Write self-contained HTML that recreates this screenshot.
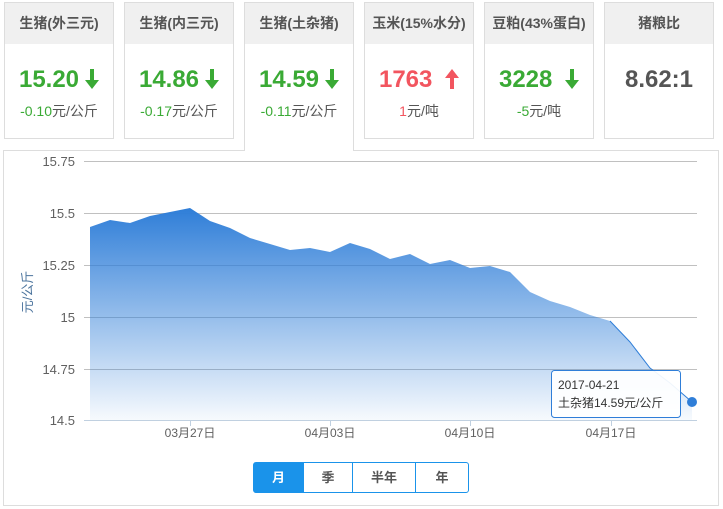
<!DOCTYPE html><html><head><meta charset="utf-8"><style>
body{margin:0;width:723px;height:509px;background:#fff;font-family:"Liberation Sans","Noto Sans CJK SC",sans-serif;position:relative;overflow:hidden}
.c{position:absolute;top:2px;width:108px;height:135px;border:1px solid #ddd;background:#fff;text-align:center}
.c .h{height:41px;background:#f0f0f0;line-height:41px;font-size:14px;font-weight:bold;color:#555}
.c .v{font-size:24px;font-weight:bold;margin-top:20px;height:32px;line-height:32px}
.c .v svg{vertical-align:-2px;margin-left:6px}
.c .s{font-size:14px;color:#555;margin-top:5px}
.g{color:#3aaa35}.r{color:#f2555f}
.act{height:148px;border-bottom:none;z-index:2}
.chart{position:absolute;left:3px;top:150px;width:714px;height:354px;border:1px solid #ddd}
.btns{position:absolute;left:253px;top:462px;width:214px;height:29px;border:1px solid #1a93ea;border-radius:3px;display:flex;font-size:13px;font-weight:bold;color:#555}
.btns div{text-align:center;line-height:29px;border-left:1px solid #1a93ea}
</style></head><body>
<div class="c" style="left:4px"><div class="h">生猪(外三元)</div><div class="v g">15.20<svg width="14" height="20" viewBox="0 0 14 20"><path d="M5 0h4v11h5l-7 9-7-9h5z" fill="#3aaa35"/></svg></div><div class="s"><span class="g">-0.10</span>元/公斤</div></div>
<div class="c" style="left:124px"><div class="h">生猪(内三元)</div><div class="v g">14.86<svg width="14" height="20" viewBox="0 0 14 20"><path d="M5 0h4v11h5l-7 9-7-9h5z" fill="#3aaa35"/></svg></div><div class="s"><span class="g">-0.17</span>元/公斤</div></div>
<div class="c act" style="left:244px"><div class="h">生猪(土杂猪)</div><div class="v g">14.59<svg width="14" height="20" viewBox="0 0 14 20"><path d="M5 0h4v11h5l-7 9-7-9h5z" fill="#3aaa35"/></svg></div><div class="s"><span class="g">-0.11</span>元/公斤</div></div>
<div class="c" style="left:364px"><div class="h">玉米(15%水分)</div><div class="v r">1763 <svg width="14" height="20" viewBox="0 0 14 20"><path d="M5 20h4v-11h5l-7-9-7 9h5z" fill="#f2555f"/></svg></div><div class="s"><span class="r">1</span>元/吨</div></div>
<div class="c" style="left:484px"><div class="h">豆粕(43%蛋白)</div><div class="v g">3228 <svg width="14" height="20" viewBox="0 0 14 20"><path d="M5 0h4v11h5l-7 9-7-9h5z" fill="#3aaa35"/></svg></div><div class="s"><span class="g">-5</span>元/吨</div></div>
<div class="c" style="left:604px"><div class="h">猪粮比</div><div class="v" style="color:#555">8.62:1</div></div>
<div class="chart"></div>
<svg style="position:absolute;left:0;top:0" width="723" height="509">
<defs><linearGradient id="gr" x1="0" y1="0" x2="0" y2="1"><stop offset="0" stop-color="#2f7ed8"/><stop offset="1" stop-color="#2f7ed8" stop-opacity="0.04"/></linearGradient></defs>
<g stroke="#c0c0c0" stroke-width="1"><line x1="84" y1="161.5" x2="697" y2="161.5"/><line x1="84" y1="213.5" x2="697" y2="213.5"/><line x1="84" y1="265.5" x2="697" y2="265.5"/><line x1="84" y1="317.5" x2="697" y2="317.5"/><line x1="84" y1="369.5" x2="697" y2="369.5"/></g>
<polygon fill="url(#gr)" points="90,227 110,220 130,223 150,216 170,212 190,208 210,221 230,228 250,238 270,244 290,250 310,248 330,252 350,243 370,249 390,259 410,254 430,264 450,260 470,268 490,266 510,272 530,292 550,301 570,307 590,315 610,321 630,342 650,368 670,383 692,402 692,420 90,420"/>
<polyline fill="none" stroke="#2f7ed8" stroke-width="1" points="610,321 630,342 650,368 670,383 692,402"/>
<line x1="84" y1="420.5" x2="697" y2="420.5" stroke="#c0d0e0"/>
<g stroke="#c0d0e0"><line x1="190.5" y1="420" x2="190.5" y2="426"/><line x1="330.5" y1="420" x2="330.5" y2="426"/><line x1="470.5" y1="420" x2="470.5" y2="426"/><line x1="611.5" y1="420" x2="611.5" y2="426"/></g>
<g font-size="13" fill="#606060" text-anchor="end" font-family="Liberation Sans,sans-serif"><text x="75" y="166">15.75</text><text x="75" y="218">15.5</text><text x="75" y="270">15.25</text><text x="75" y="322">15</text><text x="75" y="374">14.75</text><text x="75" y="425">14.5</text></g>
<g font-size="12" fill="#606060" text-anchor="middle" font-family="Liberation Sans,Noto Sans CJK SC,sans-serif"><text x="190" y="437">03月27日</text><text x="330" y="437">04月03日</text><text x="470" y="437">04月10日</text><text x="611" y="437">04月17日</text></g>
<text transform="translate(32,292) rotate(-90)" text-anchor="middle" font-size="13" fill="#4d759e" font-family="Liberation Sans,Noto Sans CJK SC,sans-serif">元/公斤</text>
<circle cx="692" cy="402" r="5" fill="#2f7ed8"/>
<rect x="551.5" y="370.5" width="129" height="47" rx="3" fill="#fff" fill-opacity="0.92" stroke="#2f7ed8"/>
<g font-size="12" fill="#333" font-family="Liberation Sans,Noto Sans CJK SC,sans-serif"><text x="558" y="389">2017-04-21</text><text x="558" y="407">土杂猪14.59元/公斤</text></g>
</svg>
<div class="btns"><div style="width:49px;border-left:none;background:#1a93ea;color:#fff">月</div><div style="width:48px">季</div><div style="width:62px">半年</div><div style="flex:1">年</div></div>
</body></html>
